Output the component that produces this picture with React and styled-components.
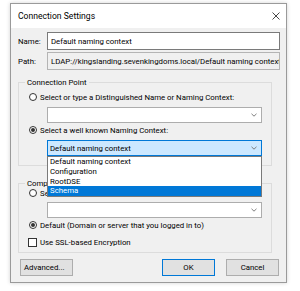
import React from "react";
import styled, { createGlobalStyle } from "styled-components";

const GlobalStyle = createGlobalStyle`
  html, body {
    margin: 0;
    padding: 0;
    background: #ffffff;
  }
  * {
    box-sizing: border-box;
  }
`;

const Page = styled.div`
  width: 300px;
  height: 291px;
  padding: 3px 13px 8px 10px;
  font-family: Roboto, "Open Sans", sans-serif;
  font-size: 7.8px;
  color: #000;
`;

const Dialog = styled.div`
  width: 277px;
  height: 280px;
  border: 1px solid #9a9a9a;
  box-shadow: 0 0 4px rgba(0, 0, 0, 0.18);
  display: flex;
  flex-direction: column;
  background: #fff;
`;

const TitleBar = styled.div`
  height: 24px;
  display: flex;
  align-items: center;
  justify-content: space-between;
  padding: 0 6px 0 7px;
  background: #fff;
  font-size: 8.6px;
`;

const CloseIcon = styled.svg`
  width: 8px;
  height: 8px;
  stroke: #333;
  stroke-width: 0.9;
`;

const Body = styled.div`
  flex: 1;
  background: #f0f0f0;
  padding: 4px 6px 6px 7px;
  display: flex;
  flex-direction: column;
`;

const FieldRow = styled.div`
  display: flex;
  align-items: center;
  height: 18px;
  margin-top: ${(p) => p.top || 0}px;
`;

const Label = styled.span`
  width: 29px;
  flex-shrink: 0;
`;

const TextBox = styled.div`
  flex: 1;
  height: 18px;
  border: 1px solid ${(p) => (p.readOnly ? "#b4b4b4" : "#7a7a7a")};
  background: ${(p) => (p.readOnly ? "#f0f0f0" : "#fff")};
  display: flex;
  align-items: center;
  padding-left: 3px;
  white-space: nowrap;
  overflow: hidden;
`;

const Group = styled.div`
  position: relative;
  border: 1px solid #dcdcdc;
  margin: ${(p) => p.top}px 8px 0 0;
  padding: ${(p) => p.pt}px 9px ${(p) => p.pb}px 10px;
  display: flex;
  flex-direction: column;
`;

const GroupTitle = styled.span`
  position: absolute;
  top: -6px;
  left: 6px;
  padding: 0 2px;
  background: #f0f0f0;
  line-height: 11px;
`;

const OptionRow = styled.div`
  height: 12px;
  display: flex;
  align-items: center;
  gap: 3px;
  margin-top: ${(p) => p.top || 0}px;
  white-space: nowrap;
`;

const Radio = styled.span`
  width: 8px;
  height: 8px;
  border-radius: 50%;
  border: 1px solid #333;
  background: #fff;
  display: flex;
  align-items: center;
  justify-content: center;
  flex-shrink: 0;
  &::after {
    content: "";
    width: 4px;
    height: 4px;
    border-radius: 50%;
    background: ${(p) => (p.checked ? "#333" : "transparent")};
  }
`;

const Check = styled.span`
  width: 9px;
  height: 9px;
  border: 1px solid #333;
  background: #fff;
  flex-shrink: 0;
  margin-left: -1px;
`;

const ComboWrap = styled.div`
  position: relative;
  margin: ${(p) => p.top || 0}px 0 0 18px;
`;

const Combo = styled.div`
  height: 16px;
  border: 1px solid ${(p) => (p.focused ? "#0078d7" : "#adadad")};
  background: ${(p) => (p.focused ? "#cce8ff" : "#fff")};
  display: flex;
  align-items: center;
  justify-content: space-between;
  padding: 0 4px 0 2px;
  white-space: nowrap;
`;

const Chevron = styled.svg`
  width: 6px;
  height: 4px;
  fill: none;
  stroke: #707070;
  stroke-width: 0.9;
`;

const DropList = styled.ul`
  position: absolute;
  top: 100%;
  left: 0;
  right: 0;
  margin: 0;
  padding: 0;
  list-style: none;
  background: #fff;
  border: 1px solid #7a7a7a;
  z-index: 2;
`;

const DropItem = styled.li`
  height: 9.8px;
  line-height: 9.8px;
  padding-left: 2px;
  background: ${(p) => (p.active ? "#0078d7" : "transparent")};
  color: ${(p) => (p.active ? "#fff" : "#000")};
`;

const ButtonRow = styled.div`
  display: flex;
  align-items: center;
  margin-top: 6px;
  padding-left: 2px;
  padding-right: 1px;
`;

const Button = styled.div`
  width: ${(p) => p.w || 53}px;
  height: 17px;
  border: 1px solid ${(p) => (p.primary ? "#0078d7" : "#adadad")};
  background: #e1e1e1;
  display: flex;
  align-items: center;
  justify-content: ${(p) => (p.left ? "flex-start" : "center")};
  padding-left: ${(p) => (p.left ? 3 : 0)}px;
  margin-left: ${(p) => p.ml || 0}px;
`;

const ChevronDown = () => (
  <Chevron viewBox="0 0 6 4">
    <path d="M0.5 0.8 L3 3.2 L5.5 0.8" />
  </Chevron>
);

const contexts = ["Default naming context", "Configuration", "RootDSE", "Schema"];

export default function App() {
  return (
    <Page>
      <GlobalStyle />
      <Dialog>
        <TitleBar>
          <span>Connection Settings</span>
          <CloseIcon viewBox="0 0 8 8">
            <path d="M0.5 0.5 L7.5 7.5 M7.5 0.5 L0.5 7.5" />
          </CloseIcon>
        </TitleBar>
        <Body>
          <FieldRow>
            <Label>Name:</Label>
            <TextBox>Default naming context</TextBox>
          </FieldRow>
          <FieldRow top={2}>
            <Label>Path:</Label>
            <TextBox readOnly>
              LDAP://kingslanding.sevenkingdoms.local/Default naming context
            </TextBox>
          </FieldRow>

          <Group top={12} pt={8} pb={9}>
            <GroupTitle>Connection Point</GroupTitle>
            <OptionRow>
              <Radio />
              <span>Select or type a Distinguished Name or Naming Context:</span>
            </OptionRow>
            <ComboWrap top={4}>
              <Combo>
                <span />
                <ChevronDown />
              </Combo>
            </ComboWrap>
            <OptionRow top={1}>
              <Radio checked />
              <span>Select a well known Naming Context:</span>
            </OptionRow>
            <ComboWrap top={4}>
              <Combo focused>
                <span>Default naming context</span>
                <ChevronDown />
              </Combo>
              <DropList>
                {contexts.map((c) => (
                  <DropItem key={c} active={c === "Schema"}>
                    {c}
                  </DropItem>
                ))}
              </DropList>
            </ComboWrap>
          </Group>

          <Group top={17} pt={3} pb={4}>
            <GroupTitle>Computer</GroupTitle>
            <OptionRow>
              <Radio />
              <span>Select or type a domain or server:</span>
            </OptionRow>
            <ComboWrap top={3}>
              <Combo>
                <span />
                <ChevronDown />
              </Combo>
            </ComboWrap>
            <OptionRow top={1}>
              <Radio checked />
              <span>Default (Domain or server that you logged in to)</span>
            </OptionRow>
            <OptionRow top={5}>
              <Check />
              <span>Use SSL-based Encryption</span>
            </OptionRow>
          </Group>

          <ButtonRow>
            <Button left w={53}>
              Advanced...
            </Button>
            <Button primary ml={89}>
              OK
            </Button>
            <Button ml={11}>Cancel</Button>
          </ButtonRow>
        </Body>
      </Dialog>
    </Page>
  );
}
